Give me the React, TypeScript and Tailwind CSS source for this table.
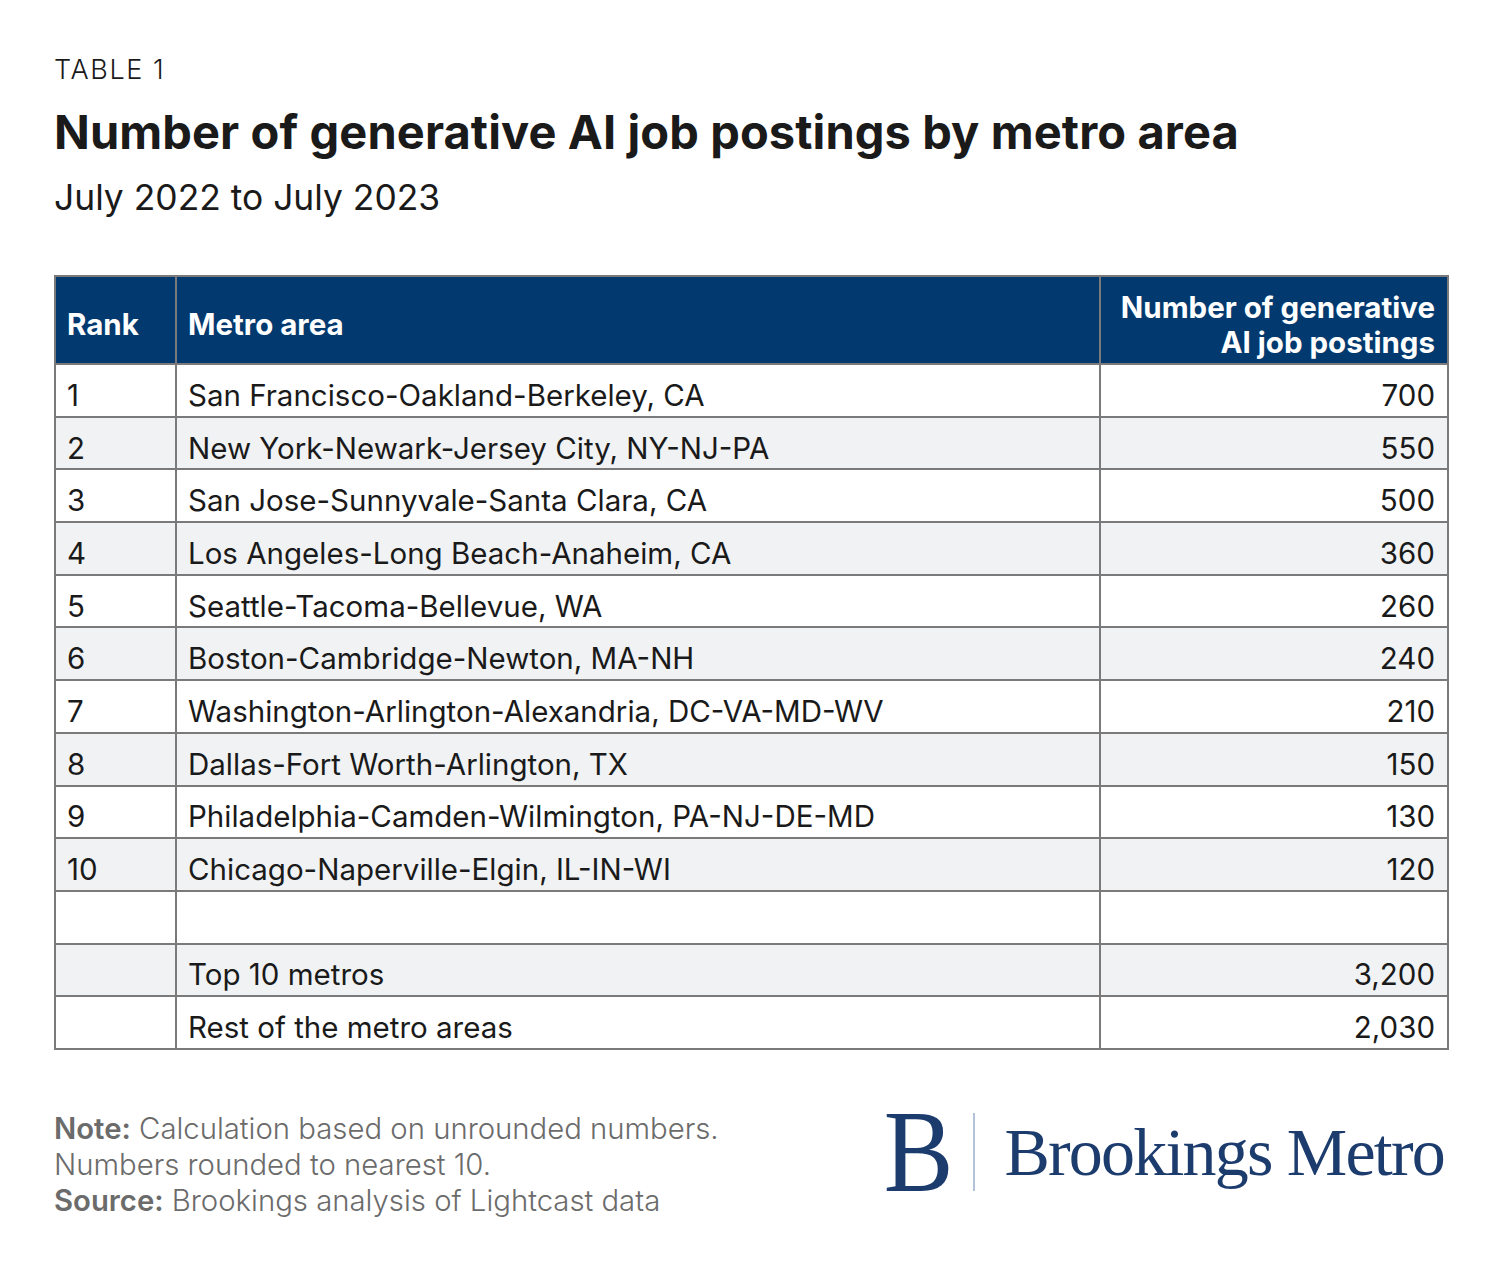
const rows = [
  { rank: "1", metro: "San Francisco-Oakland-Berkeley, CA", value: "700" },
  { rank: "2", metro: "New York-Newark-Jersey City, NY-NJ-PA", value: "550" },
  { rank: "3", metro: "San Jose-Sunnyvale-Santa Clara, CA", value: "500" },
  { rank: "4", metro: "Los Angeles-Long Beach-Anaheim, CA", value: "360" },
  { rank: "5", metro: "Seattle-Tacoma-Bellevue, WA", value: "260" },
  { rank: "6", metro: "Boston-Cambridge-Newton, MA-NH", value: "240" },
  { rank: "7", metro: "Washington-Arlington-Alexandria, DC-VA-MD-WV", value: "210" },
  { rank: "8", metro: "Dallas-Fort Worth-Arlington, TX", value: "150" },
  { rank: "9", metro: "Philadelphia-Camden-Wilmington, PA-NJ-DE-MD", value: "130" },
  { rank: "10", metro: "Chicago-Naperville-Elgin, IL-IN-WI", value: "120" },
  { rank: "", metro: "", value: "" },
  { rank: "", metro: "Top 10 metros", value: "3,200" },
  { rank: "", metro: "Rest of the metro areas", value: "2,030" },
];

export default function App() {
  return (
    <div className="w-[1500px] h-[1286px] bg-white px-[54px] pt-[52px] font-['Inter',sans-serif] text-[#1a1a1a]">
      <div className="text-[27px] leading-[36px] font-light tracking-[1.6px]">TABLE 1</div>
      <h1 className="mt-[16px] text-[47px] leading-[56px] font-bold tracking-[0.1px]">
        Number of generative AI job postings by metro area
      </h1>
      <div className="mt-[15px] text-[35.4px] leading-[46px]">July 2022 to July 2023</div>

      <table className="mt-[54px] w-[1393px] border-collapse text-[29.5px] table-fixed">
        <colgroup>
          <col className="w-[121px]" />
          <col className="w-[924px]" />
          <col className="w-[348px]" />
        </colgroup>
        <thead>
          <tr className="h-[88px] bg-[#023a70] text-white font-semibold">
            <th className="border-2 border-[#7a7a7a] px-[11px] pt-[9px] text-left align-middle">Rank</th>
            <th className="border-2 border-[#7a7a7a] px-[11px] pt-[9px] text-left align-middle">Metro area</th>
            <th className="border-2 border-[#7a7a7a] px-[12px] pt-[9px] text-right align-middle leading-[35px]">
              Number of generative
              <br />
              AI job postings
            </th>
          </tr>
        </thead>
        <tbody>
          {rows.map((r, i) => (
            <tr key={i} className={`h-[52.7px] ${i % 2 === 1 ? "bg-[#f1f2f4]" : "bg-white"}`}>
              <td className="border-2 border-[#7a7a7a] px-[11px] pt-[9px] leading-[36px]">{r.rank}</td>
              <td className="border-2 border-[#7a7a7a] px-[11px] pt-[9px] leading-[36px]">{r.metro}</td>
              <td className="border-2 border-[#7a7a7a] px-[12px] pt-[9px] leading-[36px] text-right">{r.value}</td>
            </tr>
          ))}
        </tbody>
      </table>

      <div className="mt-[61px] flex justify-between items-start">
        <div className="text-[29.3px] leading-[36px] font-light text-[#6b6b6b]">
          <div>
            <span className="font-semibold">Note:</span> Calculation based on unrounded numbers.
          </div>
          <div>Numbers rounded to nearest 10.</div>
          <div>
            <span className="font-semibold">Source:</span> Brookings analysis of Lightcast data
          </div>
        </div>
        <div className="flex items-center mt-[-4px] mr-[2px] text-[#1d3c6e] font-['Liberation_Serif',serif]">
          <span className="inline-block text-[116px] leading-[90px] scale-x-[0.9] origin-right">B</span>
          <div className="ml-[20px] w-[2px] h-[78px] bg-[#b4c2da]" />
          <span className="ml-[29px] text-[68px] leading-[80px] tracking-[-1.8px]">Brookings Metro</span>
        </div>
      </div>
    </div>
  );
}
